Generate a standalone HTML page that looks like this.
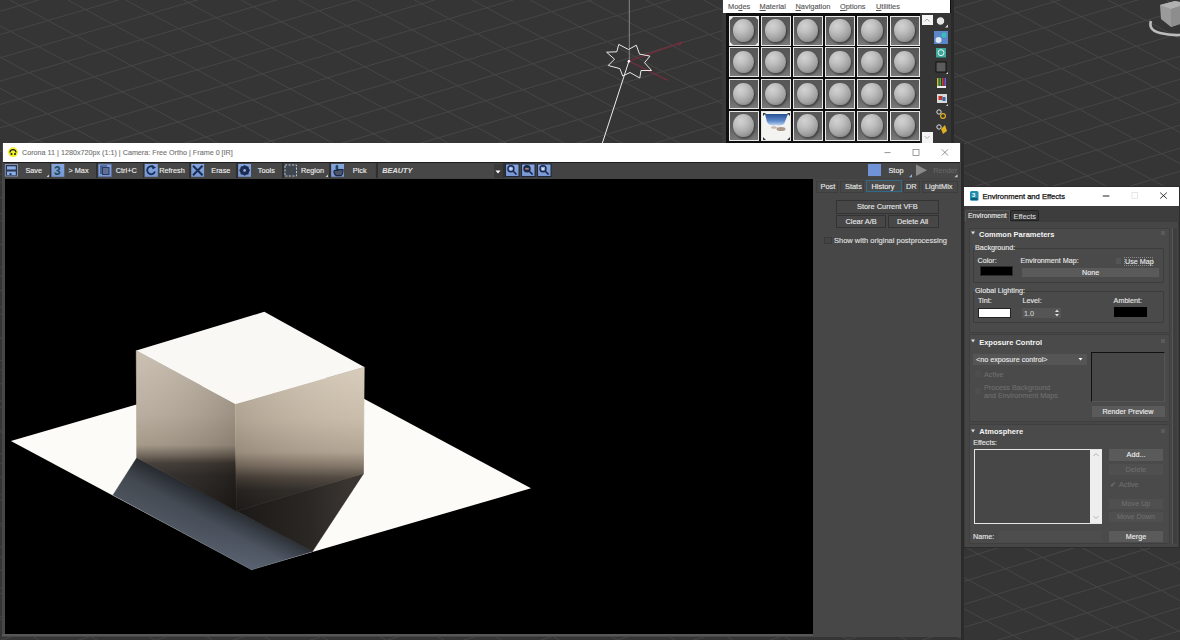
<!DOCTYPE html>
<html><head><meta charset="utf-8">
<style>
*{margin:0;padding:0;box-sizing:border-box}
html,body{width:1180px;height:640px;overflow:hidden;background:#353535;font-family:"Liberation Sans",sans-serif;position:relative}
.a{position:absolute}
.t{position:absolute;white-space:nowrap;line-height:1}
/* material editor */
#me{left:722px;top:0;width:229px;height:143px;background:#0f0f0f;border-left:4.5px solid #3a3a3a}
#memenu{left:723px;top:0;width:227px;height:12.5px;background:#fff;font-size:7.4px;color:#555}
.cell{position:absolute;width:30.4px;height:30.2px;border:1px solid #e8e8e8;background:linear-gradient(#565656 0,#5e5e5e 55%,#7a7a7a 100%);overflow:hidden}
.sph{position:absolute;left:3px;top:2.8px;width:21.5px;height:22.5px;border-radius:50%;background:radial-gradient(circle at 36% 30%,#d2d2d2 0,#c0c0c0 30%,#a2a2a2 62%,#707070 100%);box-shadow:1px 2px 2px rgba(0,0,0,.4)}
.sky{background:#f3f3f1}
#mecol{left:920px;top:13px;width:30.5px;height:130px;background:#353535}
/* VFB */
#vfb{left:2px;top:143px;width:959px;height:493.5px;background:#474747}
#vtitle{left:3px;top:143px;width:957px;height:19px;background:#fff}
#vtool{left:3px;top:162px;width:957px;height:17px;background:#434343;border-top:1.5px solid #1f1f1f}
.btn{position:absolute;top:163.5px;height:14.3px;background:#474747;font-size:7.3px;color:#f0f0f0;-webkit-text-stroke:0.15px #f0f0f0}
.ico{position:absolute;top:0.4px;width:12.8px;height:12.8px;background:#6f93d6;border:1px solid #52678f}
#render{left:5px;top:179px;width:808px;height:455px;background:#000}
#rpanel{left:813px;top:179px;width:148px;height:457.5px;background:#474747}
/* dialog */
#dlg{left:963px;top:186px;width:217px;height:362px;background:#3b3b3b;border:1px solid #2c2c2c}
#dtitle{left:964px;top:187px;width:214.5px;height:19px;background:#fff}
.roll{position:absolute;background:#4a4a4a;border:1px solid #3f3f3f;border-radius:1px}
.lbl{position:absolute;white-space:nowrap;line-height:1;font-size:7.2px;color:#e8e8e8}
.hdr{position:absolute;white-space:nowrap;line-height:1;font-size:7.5px;color:#f4f4f4;font-weight:bold}
.grp{position:absolute;border:1px solid #3c3c3c;border-radius:1px}
.dbtn{position:absolute;background:#5a5a5a;font-size:7.2px;color:#eee;text-align:center;line-height:11px}
.dis{color:#6e6e6e}
.t,.lbl,.dbtn{-webkit-text-stroke:0.12px}
</style></head><body>
<svg class="a" style="left:0;top:0" width="1180" height="640" stroke="#464646" stroke-width="1" fill="none">
<line x1="0" y1="-35.3" x2="1180" y2="-380.3"/>
<line x1="0" y1="-12.0" x2="1180" y2="-357.3"/>
<line x1="0" y1="11.3" x2="1180" y2="-334.3"/>
<line x1="0" y1="34.6" x2="1180" y2="-311.3"/>
<line x1="0" y1="57.9" x2="1180" y2="-288.4"/>
<line x1="0" y1="81.2" x2="1180" y2="-265.4"/>
<line x1="0" y1="104.5" x2="1180" y2="-242.4"/>
<line x1="0" y1="127.8" x2="1180" y2="-219.4"/>
<line x1="0" y1="151.1" x2="1180" y2="-196.5"/>
<line x1="0" y1="174.4" x2="1180" y2="-173.5"/>
<line x1="0" y1="197.7" x2="1180" y2="-150.5"/>
<line x1="0" y1="221.0" x2="1180" y2="-127.5"/>
<line x1="0" y1="244.3" x2="1180" y2="-104.6"/>
<line x1="0" y1="267.6" x2="1180" y2="-81.6"/>
<line x1="0" y1="290.9" x2="1180" y2="-58.6"/>
<line x1="0" y1="314.2" x2="1180" y2="-35.6"/>
<line x1="0" y1="337.5" x2="1180" y2="-12.6"/>
<line x1="0" y1="360.8" x2="1180" y2="10.3"/>
<line x1="0" y1="384.1" x2="1180" y2="33.3"/>
<line x1="0" y1="407.4" x2="1180" y2="56.3"/>
<line x1="0" y1="430.7" x2="1180" y2="79.3"/>
<line x1="0" y1="454.0" x2="1180" y2="102.2"/>
<line x1="0" y1="477.3" x2="1180" y2="125.2"/>
<line x1="0" y1="500.6" x2="1180" y2="148.2"/>
<line x1="0" y1="523.9" x2="1180" y2="171.2"/>
<line x1="0" y1="547.2" x2="1180" y2="194.1"/>
<line x1="0" y1="570.5" x2="1180" y2="217.1"/>
<line x1="0" y1="593.8" x2="1180" y2="240.1"/>
<line x1="0" y1="617.1" x2="1180" y2="263.1"/>
<line x1="0" y1="640.4" x2="1180" y2="286.0"/>
<line x1="0" y1="663.7" x2="1180" y2="309.0"/>
<line x1="0" y1="687.0" x2="1180" y2="332.0"/>
<line x1="0" y1="710.3" x2="1180" y2="355.0"/>
<line x1="0" y1="733.6" x2="1180" y2="378.0"/>
<line x1="0" y1="756.9" x2="1180" y2="400.9"/>
<line x1="0" y1="780.2" x2="1180" y2="423.9"/>
<line x1="0" y1="803.5" x2="1180" y2="446.9"/>
<line x1="0" y1="826.8" x2="1180" y2="469.9"/>
<line x1="0" y1="850.1" x2="1180" y2="492.8"/>
<line x1="0" y1="873.4" x2="1180" y2="515.8"/>
<line x1="0" y1="896.7" x2="1180" y2="538.8"/>
<line x1="0" y1="920.0" x2="1180" y2="561.8"/>
<line x1="0" y1="943.3" x2="1180" y2="584.7"/>
<line x1="0" y1="966.6" x2="1180" y2="607.7"/>
<line x1="0" y1="989.9" x2="1180" y2="630.7"/>
<line x1="0" y1="1013.2" x2="1180" y2="653.7"/>
<line x1="0" y1="1036.5" x2="1180" y2="676.6"/>
<line x1="0" y1="1059.8" x2="1180" y2="699.6"/>
<line x1="0" y1="1083.1" x2="1180" y2="722.6"/>
<line x1="0" y1="1106.4" x2="1180" y2="745.6"/>
<line x1="0" y1="1129.7" x2="1180" y2="768.6"/>
<line x1="0" y1="1153.0" x2="1180" y2="791.5"/>
<line x1="0" y1="1176.3" x2="1180" y2="814.5"/>
<line x1="0" y1="1199.6" x2="1180" y2="837.5"/>
<line x1="0" y1="1222.9" x2="1180" y2="860.5"/>
<line x1="0" y1="1246.2" x2="1180" y2="883.4"/>
<line x1="0" y1="1269.5" x2="1180" y2="906.4"/>
<line x1="0" y1="1292.8" x2="1180" y2="929.4"/>
<line x1="0" y1="1316.1" x2="1180" y2="952.4"/>
<line x1="0" y1="1339.4" x2="1180" y2="975.3"/>
<line x1="0" y1="1362.7" x2="1180" y2="998.3"/>
<line x1="0" y1="1386.0" x2="1180" y2="1021.3"/>
<line x1="0" y1="1409.3" x2="1180" y2="1044.3"/>
<line x1="0" y1="1432.6" x2="1180" y2="1067.2"/>
<line x1="0" y1="1455.9" x2="1180" y2="1090.2"/>
<line x1="0" y1="1479.2" x2="1180" y2="1113.2"/>
<line x1="0" y1="1502.5" x2="1180" y2="1136.2"/>
<line x1="0" y1="1525.8" x2="1180" y2="1159.2"/>
<line x1="0" y1="1549.1" x2="1180" y2="1182.1"/>
<line x1="0" y1="1572.4" x2="1180" y2="1205.1"/>
<line x1="0" y1="1595.7" x2="1180" y2="1228.1"/>
<line x1="0" y1="1619.0" x2="1180" y2="1251.1"/>
<line x1="0" y1="1642.3" x2="1180" y2="1274.0"/>
<line x1="0" y1="1665.6" x2="1180" y2="1297.0"/>
<line x1="0" y1="1688.9" x2="1180" y2="1320.0"/>
<line x1="0" y1="1712.2" x2="1180" y2="1343.0"/>
<line x1="0" y1="1735.5" x2="1180" y2="1365.9"/>
<line x1="-1435.0" y1="0" x2="-249.8" y2="640"/>
<line x1="-1377.2" y1="0" x2="-192.0" y2="640"/>
<line x1="-1319.4" y1="0" x2="-134.2" y2="640"/>
<line x1="-1261.6" y1="0" x2="-76.4" y2="640"/>
<line x1="-1203.8" y1="0" x2="-18.6" y2="640"/>
<line x1="-1146.0" y1="0" x2="39.2" y2="640"/>
<line x1="-1088.2" y1="0" x2="97.0" y2="640"/>
<line x1="-1030.4" y1="0" x2="154.8" y2="640"/>
<line x1="-972.6" y1="0" x2="212.6" y2="640"/>
<line x1="-914.8" y1="0" x2="270.4" y2="640"/>
<line x1="-857.0" y1="0" x2="328.2" y2="640"/>
<line x1="-799.2" y1="0" x2="386.0" y2="640"/>
<line x1="-741.4" y1="0" x2="443.8" y2="640"/>
<line x1="-683.6" y1="0" x2="501.6" y2="640"/>
<line x1="-625.8" y1="0" x2="559.4" y2="640"/>
<line x1="-568.0" y1="0" x2="617.2" y2="640"/>
<line x1="-510.2" y1="0" x2="675.0" y2="640"/>
<line x1="-452.4" y1="0" x2="732.8" y2="640"/>
<line x1="-394.6" y1="0" x2="790.6" y2="640"/>
<line x1="-336.8" y1="0" x2="848.4" y2="640"/>
<line x1="-279.0" y1="0" x2="906.2" y2="640"/>
<line x1="-221.2" y1="0" x2="964.0" y2="640"/>
<line x1="-163.4" y1="0" x2="1021.8" y2="640"/>
<line x1="-105.6" y1="0" x2="1079.6" y2="640"/>
<line x1="-47.8" y1="0" x2="1137.4" y2="640"/>
<line x1="10.0" y1="0" x2="1195.2" y2="640"/>
<line x1="67.8" y1="0" x2="1253.0" y2="640"/>
<line x1="125.6" y1="0" x2="1310.8" y2="640"/>
<line x1="183.4" y1="0" x2="1368.6" y2="640"/>
<line x1="241.2" y1="0" x2="1426.4" y2="640"/>
<line x1="299.0" y1="0" x2="1484.2" y2="640"/>
<line x1="356.8" y1="0" x2="1542.0" y2="640"/>
<line x1="414.6" y1="0" x2="1599.8" y2="640"/>
<line x1="472.4" y1="0" x2="1657.6" y2="640"/>
<line x1="530.2" y1="0" x2="1715.4" y2="640"/>
<line x1="588.0" y1="0" x2="1773.2" y2="640"/>
<line x1="645.8" y1="0" x2="1831.0" y2="640"/>
<line x1="703.6" y1="0" x2="1888.8" y2="640"/>
<line x1="761.4" y1="0" x2="1946.6" y2="640"/>
<line x1="819.2" y1="0" x2="2004.4" y2="640"/>
<line x1="877.0" y1="0" x2="2062.2" y2="640"/>
<line x1="934.8" y1="0" x2="2120.0" y2="640"/>
<line x1="992.6" y1="0" x2="2177.8" y2="640"/>
<line x1="1050.4" y1="0" x2="2235.6" y2="640"/>
<line x1="1108.2" y1="0" x2="2293.4" y2="640"/>
<line x1="1166.0" y1="0" x2="2351.2" y2="640"/>
<line x1="1223.8" y1="0" x2="2409.0" y2="640"/>
<line x1="1281.6" y1="0" x2="2466.8" y2="640"/>
<line x1="1339.4" y1="0" x2="2524.6" y2="640"/>
<line x1="1397.2" y1="0" x2="2582.4" y2="640"/>
</svg>

<!-- star light -->
<svg class="a" style="left:0;top:0" width="1180" height="640" fill="none">
<line x1="629.3" y1="0" x2="629.3" y2="61" stroke="#9a9a9a" stroke-width="0.8"/>
<polyline points="628.9,61.2 681.6,42.4 679,46" stroke="#7a2c3c" stroke-width="1.3" stroke-opacity="0.9"/>
<line x1="628.9" y1="61.2" x2="668" y2="80.3" stroke="#7a2c3c" stroke-width="1.3" stroke-opacity="0.9"/>
<polygon points="618.75,44.4 628.5,49.5 636.3,45.2 639.5,54.1 650,56.1 644.5,62.7 651.6,70.5 641,70.5 639.8,78 630,72.5 622.7,76 619.9,68.6 608.2,65.5 614.5,59.2 606.6,52.2 616.8,51.8" stroke="#e8e8e8" stroke-width="1"/>
<line x1="628.9" y1="61.2" x2="602.4" y2="143" stroke="#ececec" stroke-width="1"/>
<circle cx="628.9" cy="61.2" r="1.3" fill="#fff"/>
</svg>

<!-- viewcube -->
<svg class="a" style="left:1130px;top:0" width="50" height="40">
<path d="M 1151 21 Q 1148 30 1160 33 Q 1170 35.5 1180 35" transform="translate(-1130,0)" stroke="#bdbdbd" stroke-width="2.6" fill="none"/>
<polygon points="30,5 45,1 50,2 50,24 41,27 31,19" fill="#9a9a9a"/>
<polygon points="30,5 41,9 50,6 50,2 45,1" fill="#b0b0b0"/>
<polygon points="41,9 50,6 50,24 41,27" fill="#8d8d8d"/>
</svg>

<!-- material editor -->
<div class="a" style="left:951px;top:0;width:3px;height:143px;background:#2a2a2a"></div>
<div class="a" id="me"></div>
<div class="a" id="memenu">
 <span class="t" style="left:5px;top:2.5px">Mo<u>d</u>es</span>
 <span class="t" style="left:36.5px;top:2.5px"><u>M</u>aterial</span>
 <span class="t" style="left:72.5px;top:2.5px"><u>N</u>avigation</span>
 <span class="t" style="left:117px;top:2.5px"><u>O</u>ptions</span>
 <span class="t" style="left:153px;top:2.5px"><u>U</u>tilities</span>
</div>
<div class="a" id="mecol"></div>
<div class="cell" style="left:728.5px;top:15.5px"><div class="sph"></div><svg style="position:absolute;left:0;top:0" width="29" height="29"><path d="M0 0h3.2l-3.2 3.2zM28.4 0h-3.2l3.2 3.2zM0 28.2h3.2l-3.2-3.2zM28.4 28.2h-3.2l3.2-3.2z" fill="#eee"/></svg></div>
<div class="cell" style="left:760.7px;top:15.5px"><div class="sph"></div></div>
<div class="cell" style="left:792.9px;top:15.5px"><div class="sph"></div></div>
<div class="cell" style="left:825.1px;top:15.5px"><div class="sph"></div></div>
<div class="cell" style="left:857.3px;top:15.5px"><div class="sph"></div></div>
<div class="cell" style="left:889.5px;top:15.5px"><div class="sph"></div></div>
<div class="cell" style="left:728.5px;top:47.2px"><div class="sph"></div></div>
<div class="cell" style="left:760.7px;top:47.2px"><div class="sph"></div></div>
<div class="cell" style="left:792.9px;top:47.2px"><div class="sph"></div></div>
<div class="cell" style="left:825.1px;top:47.2px"><div class="sph"></div></div>
<div class="cell" style="left:857.3px;top:47.2px"><div class="sph"></div></div>
<div class="cell" style="left:889.5px;top:47.2px"><div class="sph"></div></div>
<div class="cell" style="left:728.5px;top:78.9px"><div class="sph"></div></div>
<div class="cell" style="left:760.7px;top:78.9px"><div class="sph"></div></div>
<div class="cell" style="left:792.9px;top:78.9px"><div class="sph"></div></div>
<div class="cell" style="left:825.1px;top:78.9px"><div class="sph"></div></div>
<div class="cell" style="left:857.3px;top:78.9px"><div class="sph"></div></div>
<div class="cell" style="left:889.5px;top:78.9px"><div class="sph"></div></div>
<div class="cell" style="left:728.5px;top:110.6px"><div class="sph"></div></div>
<div class="cell sky" style="left:760.7px;top:110.6px"><svg style="position:absolute;left:0;top:0" width="29" height="29"><defs><linearGradient id="skg" x1="0" y1="0" x2="0" y2="1"><stop offset="0" stop-color="#264f94"/><stop offset="0.6" stop-color="#5f8ccc"/><stop offset="1" stop-color="#c8dcf0"/></linearGradient></defs><path d="M3 2 H26 L22 12 Q18 15 14 13 Q8 15 5 10 Z" fill="url(#skg)"/><ellipse cx="19" cy="17" rx="4.5" ry="2" fill="#9a8070" opacity="0.8"/><ellipse cx="12" cy="15.5" rx="3" ry="1.2" fill="#b09080" opacity="0.6"/><path d="M1 1h3l-3 3zM28 1h-3l3 3zM1 28h3l-3-3zM28 28h-3l3-3z" fill="#333"/></svg></div>
<div class="cell" style="left:792.9px;top:110.6px"><div class="sph"></div></div>
<div class="cell" style="left:825.1px;top:110.6px"><div class="sph"></div></div>
<div class="cell" style="left:857.3px;top:110.6px"><div class="sph"></div></div>
<div class="cell" style="left:889.5px;top:110.6px"><div class="sph"></div></div>
<div class="a" style="left:922px;top:14.5px;width:10.5px;height:10.5px;background:#f4f4f4"></div>
<div class="a" style="left:922px;top:132px;width:10.5px;height:10.5px;background:#f4f4f4"></div>
<svg class="a" style="left:920px;top:0" width="31" height="143">
 <polyline points="4.5,21.5 7,19 9.5,21.5" stroke="#999" stroke-width="0.8" fill="none"/>
 <polyline points="4.5,136 7,138.5 9.5,136" stroke="#999" stroke-width="0.8" fill="none"/>
 <circle cx="20.5" cy="21" r="4.2" fill="#e6e6e6" stroke="#222" stroke-width="0.8"/>
 <polygon points="25,27.5 28,24.5 28,27.5" fill="#ddd"/>
 <rect x="14" y="31" width="14" height="13" fill="#5b86c8"/>
 <circle cx="18.5" cy="40" r="3" fill="#dfe8f0"/>
 <circle cx="24" cy="35" r="2.6" fill="#38c0b8"/>
 <rect x="16" y="48" width="10" height="9.5" fill="#3aa89a"/>
 <circle cx="21" cy="52.7" r="3" fill="none" stroke="#eee" stroke-width="1"/>
 <rect x="16" y="62" width="10" height="10" fill="#5c5c5c" stroke="#111" stroke-width="1"/>
 <polygon points="26,74 28,72 28,74" fill="#ddd"/>
 <rect x="17" y="78" width="1.5" height="9" fill="#c9c42a"/><rect x="19.5" y="78" width="1.5" height="9" fill="#3fb04a"/><rect x="22" y="78" width="1.5" height="9" fill="#d03a3a"/><rect x="24.5" y="78" width="1.5" height="9" fill="#7a5ad0"/>
 <rect x="17" y="86" width="9" height="2" fill="#eee"/>
 <rect x="17" y="94" width="10" height="9" fill="#d9d9d9"/><rect x="18.5" y="96" width="4" height="4" fill="#c0392b"/><rect x="22.5" y="97" width="3" height="4" fill="#2f6bb3"/>
 <polygon points="26,106 28,104 28,106" fill="#ddd"/>
 <circle cx="19" cy="112" r="2.2" fill="none" stroke="#ddd" stroke-width="1"/><circle cx="23" cy="116" r="2.4" fill="none" stroke="#e0b020" stroke-width="1.2"/>
 <circle cx="19" cy="127" r="2.2" fill="none" stroke="#ddd" stroke-width="1"/><polygon points="21,129 25,125 27,131 23,134" fill="#e0b020"/>
</svg>

<!-- VFB -->
<div class="a" id="vfb"></div>
<div class="a" style="left:961px;top:143px;width:2.5px;height:497px;background:#2b2b2b"></div>
<div class="a" id="vtitle"></div>
<svg class="a" style="left:0;top:140px" width="960" height="24">
 <circle cx="13" cy="12.2" r="4.9" fill="#f0f02a"/>
 <path d="M 10 12.6 A 3 3 0 0 1 16 12.6" stroke="#1a1a1a" stroke-width="1.1" fill="none"/>
 <circle cx="11.5" cy="13.9" r="1" fill="#1a1a1a"/><circle cx="15" cy="13.9" r="1" fill="#1a1a1a"/>
 <line x1="884.5" y1="12.6" x2="890.5" y2="12.6" stroke="#777" stroke-width="0.8"/>
 <rect x="913" y="9.5" width="6" height="6" fill="none" stroke="#888" stroke-width="0.8"/>
 <line x1="941.8" y1="9.3" x2="948" y2="15.5" stroke="#777" stroke-width="0.8"/>
 <line x1="948" y1="9.3" x2="941.8" y2="15.5" stroke="#777" stroke-width="0.8"/>
</svg>
<span class="t" style="left:22px;top:149px;font-size:7.2px;color:#757575">Corona 11 | 1280x720px (1:1) | Camera: Free Ortho | Frame 0 [IR]</span>
<div class="a" id="vtool"></div>

<div class="btn" style="left:4.5px;width:45px"><span class="t" style="left:20.9px;top:3.3px">Save</span></div>
<div class="btn" style="left:51px;width:44.5px"><span class="t" style="left:17.5px;top:3.3px">&gt; Max</span></div>
<div class="btn" style="left:97.8px;width:44px"><span class="t" style="left:18px;top:3.3px">Ctrl+C</span></div>
<div class="btn" style="left:144.4px;width:44.5px"><span class="t" style="left:14.8px;top:3.3px">Refresh</span></div>
<div class="btn" style="left:190.8px;width:44.5px"><span class="t" style="left:20.5px;top:3.3px">Erase</span></div>
<div class="btn" style="left:237.8px;width:44px"><span class="t" style="left:20px;top:3.3px">Tools</span></div>
<div class="btn" style="left:283.4px;width:45.5px"><span class="t" style="left:17.5px;top:3.3px">Region</span></div>
<div class="btn" style="left:330.8px;width:44.5px"><span class="t" style="left:22px;top:3.3px">Pick</span></div>
<div class="btn" style="left:377.8px;width:125px;background:#474747"><span class="t" style="left:4.5px;top:3.3px;font-style:italic;font-weight:bold;color:#ddd">BEAUTY</span></div>
<div class="a" style="left:493.5px;top:163.5px;width:9.5px;height:14.3px;background:#3a3a3a"></div>
<div class="a" style="left:49.6px;top:163px;width:1.5px;height:15px;background:#2f2f2f"></div><div class="a" style="left:96.1px;top:163px;width:1.5px;height:15px;background:#2f2f2f"></div><div class="a" style="left:142.7px;top:163px;width:1.5px;height:15px;background:#2f2f2f"></div><div class="a" style="left:189.2px;top:163px;width:1.5px;height:15px;background:#2f2f2f"></div><div class="a" style="left:236px;top:163px;width:1.5px;height:15px;background:#2f2f2f"></div><div class="a" style="left:282px;top:163px;width:1.5px;height:15px;background:#2f2f2f"></div><div class="a" style="left:329.2px;top:163px;width:1.5px;height:15px;background:#2f2f2f"></div><div class="a" style="left:376.2px;top:163px;width:1.5px;height:15px;background:#2f2f2f"></div><div class="a" style="left:503.2px;top:163px;width:1.5px;height:15px;background:#2f2f2f"></div>
<svg class="a" style="left:0;top:160px" width="560" height="20">
 <defs><linearGradient id="ib" x1="0" y1="0" x2="0" y2="1"><stop offset="0" stop-color="#86a6e0"/><stop offset="1" stop-color="#7797d2"/></linearGradient></defs>
 <g stroke="#1c2d50" fill="none">
 <!-- save -->
 <rect x="5.3" y="4.5" width="12.2" height="11.6" fill="#2a3550" stroke="#8e9cbc" stroke-width="0.9"/>
 <rect x="7" y="6.3" width="8.8" height="3.2" fill="#8aaee6" stroke="none"/>
 <rect x="7" y="11.5" width="8.8" height="3.6" fill="#8aaee6" stroke="none"/>
 <rect x="9.5" y="13.2" width="2" height="1.9" fill="#2a3550" stroke="none"/>
 <polygon points="46.5,17 49,14.5 49,17" fill="#cfcfcf" stroke="none"/>
 <!-- max -->
 <rect x="51.5" y="4" width="12.8" height="12.8" fill="url(#ib)" stroke="none"/>
 <text x="54" y="15" font-size="12" font-family="Liberation Sans" font-weight="bold" fill="#1c4a58" stroke="none">3</text>
 <!-- copy -->
 <rect x="98.3" y="4.2" width="13" height="12.5" fill="url(#ib)" stroke="#5e74a8" stroke-width="0.8"/>
 <path d="M 101 14 V 6 H 107" stroke="#2a3a66" stroke-width="1.2"/>
 <rect x="102.5" y="7.5" width="6.5" height="7" fill="#5e6f90" stroke="#2a3a66" stroke-width="1"/>
 <!-- refresh -->
 <rect x="144.8" y="4" width="13" height="12.8" fill="url(#ib)" stroke="none"/>
 <path d="M 155 11.5 A 4 4 0 1 1 153.5 7" stroke="#17305c" stroke-width="1.8"/>
 <polygon points="152,5 156,7.5 152.5,9.5" fill="#17305c" stroke="none"/>
 <!-- erase -->
 <rect x="191.3" y="4" width="12.8" height="12.8" fill="url(#ib)" stroke="none"/>
 <path d="M 193 5.7 L 202.5 15.3 M 202.5 5.7 L 193 15.3" stroke="#1a2e55" stroke-width="2"/>
 <!-- tools gear -->
 <rect x="238.2" y="4" width="12.8" height="12.8" fill="url(#ib)" stroke="none"/>
 <circle cx="244.6" cy="10.4" r="3.6" fill="none" stroke="#1a2a50" stroke-width="2.2"/>
 <path d="M 244.6 5.2 V 15.6 M 239.4 10.4 H 249.8 M 240.9 6.7 L 248.3 14.1 M 248.3 6.7 L 240.9 14.1" stroke="#1a2a50" stroke-width="1.6"/>
 <circle cx="244.6" cy="10.4" r="1.3" fill="#9cb6e0" stroke="none"/>
 <!-- region -->
 <rect x="285" y="5" width="11.5" height="11" fill="#3f4650" stroke="#b8c4d4" stroke-width="1" stroke-dasharray="2.2 1.3"/>
 <polygon points="325.5,17 328,14.5 328,17" fill="#cfcfcf" stroke="none"/>
 <!-- pick -->
 <rect x="331.2" y="4" width="12.8" height="12.8" fill="url(#ib)" stroke="none"/>
 <rect x="335.6" y="5" width="2.6" height="6" rx="1.2" fill="#1e4a58" stroke="none"/>
 <path d="M 334.2 10.5 Q 333.2 13.5 336 15.6 H 341.2 Q 343 14.2 343 11.5 V 9.6 H 337.8 V 10.5 Z" fill="#4c5466" stroke="#1a2548" stroke-width="1.1"/>
 <!-- zoom -->
 <rect x="505.6" y="4" width="13.4" height="12.5" fill="url(#ib)" stroke="#162033" stroke-width="0.9"/>
 <circle cx="510.9" cy="8.8" r="3" stroke="#1a2548" stroke-width="1.4"/>
 <path d="M 513 11 L 516.5 14.5" stroke="#1a2548" stroke-width="1.6"/>
 <path d="M 509.3 8.8 H 512.5 M 510.9 7.2 V 10.4" stroke="#cfe0ff" stroke-width="1"/>
 <rect x="521.6" y="4" width="13.4" height="12.5" fill="url(#ib)" stroke="#162033" stroke-width="0.9"/>
 <circle cx="527" cy="8.8" r="3" stroke="#1a2548" stroke-width="1.4" fill="#2a3a40"/>
 <path d="M 529.1 11 L 532.6 14.5" stroke="#1a2548" stroke-width="1.6"/>
 <path d="M 525.3 8.8 H 528.7" stroke="#e09a9a" stroke-width="1.1"/>
 <rect x="537.6" y="4" width="13.4" height="12.5" fill="url(#ib)" stroke="#162033" stroke-width="0.9"/>
 <circle cx="543" cy="8.8" r="3" stroke="#1a2548" stroke-width="1.4"/>
 <path d="M 545.1 11 L 548.6 14.5" stroke="#1a2548" stroke-width="1.6"/>
 <path d="M 541.8 7.6 L 544.2 10 M 544.2 7.6 L 541.8 10" stroke="#eee" stroke-width="0.9"/>
 <polygon points="495.5,10.5 500.5,10.5 498,13.5" fill="#fff" stroke="none"/>
 </g>
</svg>
<div class="btn" style="left:867.5px;width:45px"><div class="ico" style="left:0.5px;top:0.8px;width:12.5px;height:12px;background:#6f93d6;border:none"></div><span class="t" style="left:21px;top:3.5px">Stop</span></div>
<div class="btn" style="left:914.3px;width:44px"><span class="t" style="left:19px;top:3.5px;color:#666">Render</span></div>
<svg class="a" style="left:914px;top:163px" width="16" height="15"><polygon points="2,1.5 13,7.3 2,13" fill="#8a8a8a"/></svg>
<svg class="a" style="left:900px;top:160px" width="60" height="20"><polygon points="9,17.3 12,14.3 12,17.3" fill="#9ab0d8"/><polygon points="54.5,17.3 57.5,14.3 57.5,17.3" fill="#cfcfcf"/></svg>

<div class="a" id="render"></div>
<div class="a" id="rpanel"></div>
<div class="a" style="left:2px;top:634.3px;width:811px;height:2px;background:#575757"></div>

<!-- render scene -->
<svg class="a" style="left:0;top:0" width="813" height="634">
 <defs>
  <linearGradient id="lf" x1="0" y1="350" x2="0" y2="512" gradientUnits="userSpaceOnUse">
   <stop offset="0" stop-color="#c9beaf"/><stop offset="0.4" stop-color="#b4a898"/><stop offset="0.586" stop-color="#a09383"/><stop offset="0.648" stop-color="#6d6256"/><stop offset="0.698" stop-color="#3c352f"/><stop offset="0.772" stop-color="#292522"/><stop offset="1" stop-color="#1c1916"/>
  </linearGradient>
  <linearGradient id="lfh" x1="136" y1="0" x2="236" y2="0" gradientUnits="userSpaceOnUse">
   <stop offset="0" stop-color="#fff" stop-opacity="0.06"/><stop offset="1" stop-color="#000" stop-opacity="0.14"/>
  </linearGradient>
  <linearGradient id="rf" x1="0" y1="367" x2="0" y2="511" gradientUnits="userSpaceOnUse">
   <stop offset="0" stop-color="#d6cab8"/><stop offset="0.368" stop-color="#c6b8a5"/><stop offset="0.59" stop-color="#ad9f8d"/><stop offset="0.6875" stop-color="#7d7062"/><stop offset="0.77" stop-color="#4a4139"/><stop offset="0.854" stop-color="#2c2723"/><stop offset="1" stop-color="#1f1c19"/>
  </linearGradient>
  <linearGradient id="rfh" x1="236" y1="0" x2="364" y2="0" gradientUnits="userSpaceOnUse">
   <stop offset="0" stop-color="#000" stop-opacity="0.12"/><stop offset="1" stop-color="#fff" stop-opacity="0.05"/>
  </linearGradient>
  <linearGradient id="sh" x1="130" y1="470" x2="285" y2="560" gradientUnits="userSpaceOnUse">
   <stop offset="0" stop-color="#4c525b"/><stop offset="0.5" stop-color="#4f5763"/><stop offset="1" stop-color="#5c6574"/>
  </linearGradient>
  <linearGradient id="sh2" x1="224.6" y1="504.6" x2="203.7" y2="543.3" gradientUnits="userSpaceOnUse">
   <stop offset="0" stop-color="#000" stop-opacity="0.5"/><stop offset="0.5" stop-color="#000" stop-opacity="0.12"/><stop offset="1" stop-color="#000" stop-opacity="0"/>
  </linearGradient>
  <linearGradient id="dk" x1="240" y1="505" x2="350" y2="500" gradientUnits="userSpaceOnUse">
   <stop offset="0" stop-color="#1c1a18"/><stop offset="0.6" stop-color="#2a2623"/><stop offset="1" stop-color="#3a3531"/>
  </linearGradient>
 </defs>
 <polygon points="10.9,440.9 290.7,359.6 531,488.3 251.6,569.8" fill="#fcfbf7"/>
 <polygon points="136.8,457.8 113,495 251.6,569.8 312.4,551.5" fill="url(#sh)" stroke="url(#sh)" stroke-width="0.5"/>
 <polygon points="136.8,457.8 113,495 251.6,569.8 312.4,551.5" fill="url(#sh2)"/>
 <polygon points="236.4,511 363.4,473.7 312.4,551.5" fill="url(#dk)" stroke="#2a2724" stroke-width="0.6"/>
 <polygon points="136.3,350.6 235.4,404.1 236.4,511 136.8,457.8" fill="url(#lf)" stroke="url(#lf)" stroke-width="0.7"/>
 <polygon points="136.3,350.6 235.4,404.1 236.4,511 136.8,457.8" fill="url(#lfh)"/>
 <polygon points="235.4,404.1 364.2,367 363.4,473.7 236.4,511" fill="url(#rf)" stroke="url(#rf)" stroke-width="0.7"/>
 <polygon points="235.4,404.1 364.2,367 363.4,473.7 236.4,511" fill="url(#rfh)"/>
 <polygon points="264.3,311.8 364.2,367 235.4,404.1 136.3,350.6" fill="#faf8f5"/>
</svg>

<!-- right panel content -->
<div class="a" style="left:816px;top:181px;width:22.4px;height:11.6px;background:#474747;border:1px solid #3d3d3d"></div>
<span class="t" style="left:820.5px;top:183px;font-size:7.4px;color:#e8e8e8">Post</span>
<div class="a" style="left:840.2px;top:181px;width:24px;height:11.6px;background:#474747;border:1px solid #3d3d3d"></div>
<span class="t" style="left:845px;top:183px;font-size:7.4px;color:#e8e8e8">Stats</span>
<div class="a" style="left:865.5px;top:180px;width:36px;height:12px;background:#4b4b4b;border:1px solid #2f6a8a"></div>
<span class="t" style="left:871.5px;top:183px;font-size:7.4px;color:#f2f2f2">History</span>
<div class="a" style="left:902.6px;top:181px;width:17px;height:11.6px;background:#474747;border:1px solid #3d3d3d"></div>
<span class="t" style="left:906px;top:183px;font-size:7.4px;color:#e8e8e8">DR</span>
<div class="a" style="left:921.6px;top:181px;width:36.6px;height:11.6px;background:#474747;border:1px solid #3d3d3d"></div>
<span class="t" style="left:925px;top:183px;font-size:7.4px;color:#e8e8e8">LightMix</span>

<div class="a" style="left:836px;top:199.5px;width:103px;height:14px;background:#474747;border:1px solid #333"></div>
<span class="t" style="left:857px;top:203px;font-size:7.4px;color:#e8e8e8">Store Current VFB</span>
<div class="a" style="left:836px;top:214.5px;width:50px;height:13.5px;background:#474747;border:1px solid #333"></div>
<span class="t" style="left:845.5px;top:217.5px;font-size:7.4px;color:#e8e8e8">Clear A/B</span>
<div class="a" style="left:887.5px;top:214.5px;width:51.5px;height:13.5px;background:#474747;border:1px solid #333"></div>
<span class="t" style="left:897px;top:217.5px;font-size:7.4px;color:#e8e8e8">Delete All</span>
<div class="a" style="left:824px;top:236.5px;width:7.5px;height:7.5px;background:#444;border:1px solid #3a3a3a"></div>
<span class="t" style="left:834px;top:236.5px;font-size:7.5px;color:#e0e0e0">Show with original postprocessing</span>

<!-- dialog -->
<div class="a" id="dlg"></div>
<div class="a" id="dtitle"></div>
<svg class="a" style="left:960px;top:186px" width="220" height="22">
 <rect x="10" y="5" width="8.5" height="9.8" rx="1.5" fill="#1f8fb0"/>
 <rect x="11" y="12" width="6.5" height="2" fill="#0d5f78"/>
 <text x="12" y="11.3" font-size="6" fill="#fff" font-family="Liberation Sans" font-weight="bold">3</text>
 <line x1="142.8" y1="10" x2="149.4" y2="10" stroke="#555" stroke-width="1.3"/>
 <rect x="172" y="6.5" width="5.5" height="6" fill="none" stroke="#ddd" stroke-width="0.7"/>
 <line x1="200.2" y1="6.6" x2="206.8" y2="12.6" stroke="#222" stroke-width="0.9"/>
 <line x1="206.8" y1="6.6" x2="200.2" y2="12.6" stroke="#222" stroke-width="0.9"/>
</svg>
<span class="t" style="left:982.4px;top:192.5px;font-size:7.6px;color:#111;-webkit-text-stroke:0.25px #111">Environment and Effects</span>
<div class="a" style="left:964px;top:206px;width:214.5px;height:16px;background:#3d3d3d"></div>
<div class="a" style="left:965.3px;top:209.7px;width:44.7px;height:12.3px;background:#444;border:1px solid #555;border-bottom:none;border-radius:1.5px 1.5px 0 0"></div>
<span class="t" style="left:968px;top:212.5px;font-size:6.9px;color:#eaeaea">Environment</span>
<div class="a" style="left:1010.4px;top:209.7px;width:29px;height:11.5px;background:#353535;border:1px solid #222;border-radius:1.5px 1.5px 0 0"></div>
<span class="t" style="left:1013.5px;top:212.5px;font-size:7.4px;color:#dadada">Effects</span>
<div class="a" style="left:964px;top:221.5px;width:214.5px;height:1px;background:#2a2a2a"></div>
<div class="a" style="left:965px;top:222px;width:213px;height:325px;background:#464646"></div>
<div class="a" style="left:1171.5px;top:228px;width:5px;height:316px;background:#3e3e3e;border-left:1px solid #555"></div>

<!-- rollout 1 -->
<div class="roll" style="left:969px;top:227.5px;width:201px;height:105px"></div>
<svg class="a" style="left:969px;top:228px" width="10" height="10"><polygon points="2,3.5 6,3.5 4,6.5" fill="#ddd"/></svg>
<span class="hdr" style="left:979px;top:230.8px">Common Parameters</span>
<div class="a" style="left:1161px;top:231px;width:4px;height:4px;background:#5a5a5a"></div>
<div class="grp" style="left:972.7px;top:248px;width:191px;height:34.5px"></div>
<div class="a" style="left:974px;top:243.5px;width:40px;height:8px;background:#4a4a4a"></div>
<span class="lbl" style="left:975px;top:244px">Background:</span>
<span class="lbl" style="left:977.5px;top:256.8px">Color:</span>
<div class="a" style="left:979.7px;top:266px;width:33.5px;height:10.3px;background:#000;border:1px solid #2a2a2a"></div>
<span class="lbl" style="left:1020.5px;top:256.8px">Environment Map:</span>
<div class="a" style="left:1115.7px;top:258px;width:5.6px;height:6px;background:#555"></div>
<div class="a" style="left:1123.5px;top:257px;width:29px;height:8.5px;border:1px dotted #888"></div>
<span class="lbl" style="left:1125px;top:257.5px">Use Map</span>
<div class="dbtn" style="left:1022px;top:267.6px;width:137.3px;height:9.6px;line-height:10.2px">None</div>
<div class="grp" style="left:972.7px;top:291px;width:191px;height:32px"></div>
<div class="a" style="left:974px;top:286.5px;width:46px;height:8px;background:#4a4a4a"></div>
<span class="lbl" style="left:975px;top:287px">Global Lighting:</span>
<span class="lbl" style="left:978px;top:296.8px">Tint:</span>
<div class="a" style="left:978.3px;top:307.5px;width:33px;height:10px;background:#fff;border:1px solid #222"></div>
<span class="lbl" style="left:1022.5px;top:296.8px">Level:</span>
<div class="a" style="left:1022px;top:308px;width:38.6px;height:9.5px;background:#555"></div>
<span class="lbl" style="left:1024px;top:309.5px;color:#ccc">1.0</span>
<svg class="a" style="left:1054px;top:308px" width="6" height="10"><polygon points="1,4 5,4 3,1.5" fill="#ddd"/><polygon points="1,6 5,6 3,8.5" fill="#ddd"/></svg>
<span class="lbl" style="left:1113.6px;top:296.8px">Ambient:</span>
<div class="a" style="left:1113.9px;top:307.2px;width:33.1px;height:10.2px;background:#000"></div>

<!-- rollout 2 -->
<div class="roll" style="left:969px;top:334px;width:201px;height:88px"></div>
<svg class="a" style="left:969px;top:336px" width="10" height="10"><polygon points="2,3.5 6,3.5 4,6.5" fill="#ddd"/></svg>
<span class="hdr" style="left:979.2px;top:338.5px">Exposure Control</span>
<div class="a" style="left:1161px;top:339px;width:4px;height:4px;background:#5a5a5a"></div>
<div class="a" style="left:973.4px;top:353.5px;width:113.8px;height:11.2px;background:#555"></div>
<span class="lbl" style="left:976px;top:355.8px">&lt;no exposure control&gt;</span>
<svg class="a" style="left:1076px;top:354px" width="10" height="10"><polygon points="2.5,4 6.5,4 4.5,6.5" fill="#fff"/></svg>
<div class="a" style="left:1090.6px;top:351.8px;width:74px;height:49.8px;background:#474747;border-top:1.5px solid #111;border-left:1.5px solid #111;border-right:1px solid #555;border-bottom:1px solid #555"></div>
<div class="dbtn" style="left:1091.5px;top:405.9px;width:73px;height:11.1px;line-height:11.1px">Render Preview</div>
<div class="a" style="left:975px;top:371px;width:6px;height:6px;background:#4e4e4e"></div>
<span class="lbl dis" style="left:984px;top:371px">Active</span>
<div class="a" style="left:975px;top:388px;width:6px;height:6px;background:#4e4e4e"></div>
<span class="lbl dis" style="left:984px;top:383.5px">Process Background</span>
<span class="lbl dis" style="left:984px;top:391.5px">and Environment Maps</span>

<!-- rollout 3 -->
<div class="roll" style="left:969px;top:424px;width:201px;height:120px"></div>
<svg class="a" style="left:969px;top:426px" width="10" height="10"><polygon points="2,3.5 6,3.5 4,6.5" fill="#ddd"/></svg>
<span class="hdr" style="left:979.3px;top:428px">Atmosphere</span>
<div class="a" style="left:1161px;top:429px;width:4px;height:4px;background:#5a5a5a"></div>
<span class="lbl" style="left:973.2px;top:439px">Effects:</span>
<div class="a" style="left:973.8px;top:449px;width:128.2px;height:74.5px;background:#474747;border:1px solid #e6e6e6"></div>
<div class="a" style="left:1090px;top:450px;width:11.5px;height:72.5px;background:#eeeeee"></div>
<svg class="a" style="left:1090px;top:450px" width="12" height="73"><polyline points="3.5,6 6,3.5 8.5,6" stroke="#999" stroke-width="0.7" fill="none"/><polyline points="3.5,66 6,68.5 8.5,66" stroke="#999" stroke-width="0.7" fill="none"/></svg>
<div class="dbtn" style="left:1108.6px;top:449.4px;width:54.8px;height:11.2px;line-height:11.2px">Add...</div>
<div class="dbtn dis" style="left:1108.6px;top:464.2px;width:54.8px;height:11px;line-height:11px;background:#4f4f4f">Delete</div>
<span class="lbl dis" style="left:1110px;top:480.5px">&#10004;</span>
<span class="lbl dis" style="left:1119px;top:480.5px">Active</span>
<div class="dbtn dis" style="left:1108.6px;top:499.2px;width:54.8px;height:10.1px;line-height:10.1px;background:#4f4f4f">Move Up</div>
<div class="dbtn dis" style="left:1108.6px;top:512.3px;width:54.8px;height:10.2px;line-height:10.2px;background:#4f4f4f">Move Down</div>
<span class="lbl" style="left:973px;top:533px">Name:</span>
<div class="a" style="left:998.6px;top:530.5px;width:103px;height:11.5px;background:#4d4d4d"></div>
<div class="dbtn" style="left:1108.6px;top:530.6px;width:54.8px;height:11.2px;line-height:11.2px">Merge</div>
</body></html>
